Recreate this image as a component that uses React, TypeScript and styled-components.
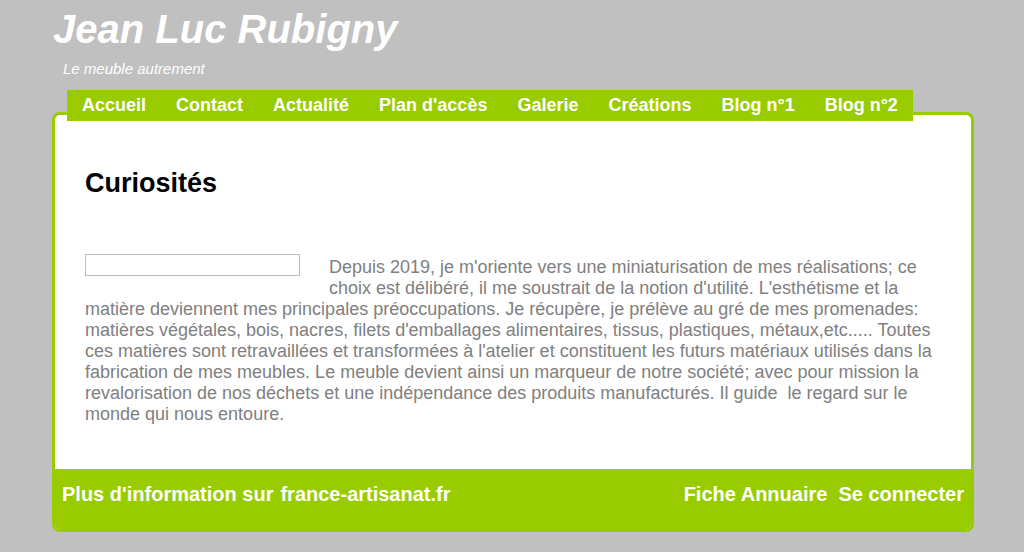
import styled, { createGlobalStyle } from 'styled-components';

const GlobalStyle = createGlobalStyle`
  body {
    margin: 0;
    background: #c0c0c0;
    font-family: 'Liberation Sans', Arial, sans-serif;
  }
`;

const menu = ['Accueil', 'Contact', 'Actualité', "Plan d'accès", 'Galerie', 'Créations', 'Blog n°1', 'Blog n°2'];

const App = () => {
  return (
    <>
      <GlobalStyle />
      <Page>
        <Header>
          <SiteTitle>Jean Luc Rubigny</SiteTitle>
          <Slogan>Le meuble autrement</Slogan>
        </Header>
        <Nav>
          {menu.map((item) => (
            <NavItem key={item} href='#'>
              {item}
            </NavItem>
          ))}
        </Nav>
        <Panel>
          <Content>
            <Title>Curiosités</Title>
            <Text>
              <Picture />
              Depuis 2019, je m'oriente vers une miniaturisation de mes réalisations; ce choix est délibéré, il me
              soustrait de la notion d'utilité. L'esthétisme et la matière deviennent mes principales préoccupations.
              Je récupère, je prélève au gré de mes promenades: matières végétales, bois, nacres, filets d'emballages
              alimentaires, tissus, plastiques, métaux,etc..... Toutes ces matières sont retravaillées et transformées
              à l'atelier et constituent les futurs matériaux utilisés dans la fabrication de mes meubles. Le meuble
              devient ainsi un marqueur de notre société; avec pour mission la revalorisation de nos déchets et une
              indépendance des produits manufacturés. Il guide&nbsp; le regard sur le monde qui nous entoure.
            </Text>
          </Content>
          <Footer>
            <FooterGroup $gap={7}>
              <span>Plus d'information sur</span>
              <FooterLink href='#'>france-artisanat.fr</FooterLink>
            </FooterGroup>
            <FooterGroup $gap={11}>
              <FooterLink href='#'>Fiche Annuaire</FooterLink>
              <FooterLink href='#'>Se connecter</FooterLink>
            </FooterGroup>
          </Footer>
        </Panel>
      </Page>
    </>
  );
};

const Page = styled.div`
  width: 922px;
  margin-left: 52px;
  padding-bottom: 21px;
`;

const Header = styled.header`
  padding-top: 7px;
`;

const SiteTitle = styled.h1`
  margin: 0;
  color: #fff;
  font-size: 40px;
  font-weight: bold;
  font-style: italic;
  line-height: 45px;
  padding-left: 1px;
`;

const Slogan = styled.div`
  margin: 8px 0 0 11px;
  color: #fff;
  font-size: 15px;
  font-style: italic;
  line-height: 17px;
`;

const Nav = styled.nav`
  position: relative;
  z-index: 1;
  display: flex;
  width: fit-content;
  margin: 13px 0 -9px 15px;
  background: #99cc00;
`;

const NavItem = styled.a`
  padding: 0 15px;
  color: #fff;
  font-size: 18px;
  font-weight: bold;
  line-height: 31px;
  text-decoration: none;
`;

const Panel = styled.main`
  border: 3px solid #99cc00;
  border-radius: 8px;
  background: #fff;
  overflow: hidden;
`;

const Content = styled.div`
  padding: 30px 30px 44px;
`;

const Title = styled.h2`
  margin: 23px 0 58px;
  color: #000;
  font-size: 27px;
  font-weight: bold;
  line-height: 31px;
`;

const Text = styled.p`
  margin: 0;
  color: #808080;
  font-size: 18px;
  line-height: 21px;
`;

const Picture = styled.span`
  float: left;
  width: 213px;
  height: 20px;
  margin: -3px 29px 14px 0;
  border: 1px solid #bdbdbd;
  background: #fff;
`;

const Footer = styled.footer`
  display: flex;
  justify-content: space-between;
  padding: 13px 7px 23px;
  background: #99cc00;
  color: #fff;
  font-size: 20px;
  font-weight: bold;
  line-height: 24px;
`;

const FooterGroup = styled.div<{ $gap: number }>`
  display: flex;
  gap: ${(p) => p.$gap}px;
`;

const FooterLink = styled.a`
  color: #fff;
  text-decoration: none;
`;

export default App;
